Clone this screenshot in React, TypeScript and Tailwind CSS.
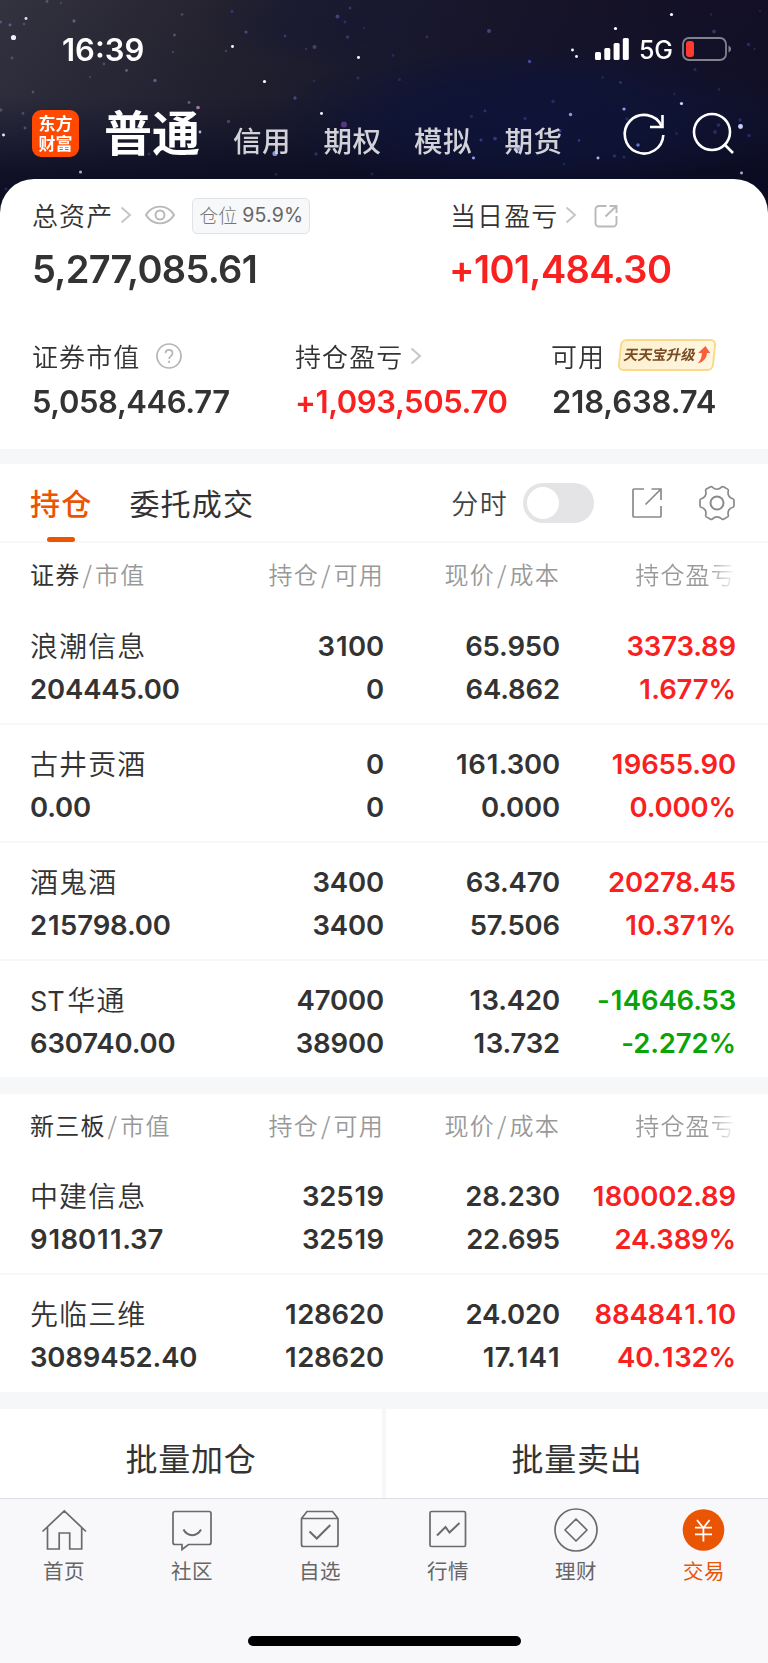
import React from "react";

const CJK = "font-['Noto_Sans_CJK_SC',sans-serif]";

type Star = [number, number, number, string, number];

const STARS: Star[] = [
  [13.5, 37.5, 2.8, "#eef0ff", 1],
  [26, 18.5, 1.6, "#e8e8ff", 0.95],
  [10, 25, 1.6, "#8f8bb8", 0.7],
  [0.5, 22, 1.6, "#7c78a8", 0.7],
  [24, 24, 1.4, "#7c78a8", 0.6],
  [47, 1.5, 1.6, "#7c78a8", 0.7],
  [74, 21, 1.8, "#8f8bb8", 0.7],
  [61, 3, 1.1, "#7c78a8", 0.6],
  [12, 58, 1.6, "#7c78a8", 0.6],
  [104, 64, 1.5, "#6e6a9a", 0.7],
  [126.5, 70.5, 1.5, "#9a92c4", 0.7],
  [155, 80.5, 1.8, "#8f7fc0", 0.8],
  [90, 77, 1.4, "#6e6a9a", 0.5],
  [33, 92, 1.5, "#8580b0", 0.6],
  [182, 14.5, 1.6, "#6660a0", 0.7],
  [174.5, 35, 1.7, "#7870b0", 0.7],
  [173, 52, 1.4, "#7870b0", 0.5],
  [232, 11.5, 1.5, "#5a50a0", 0.7],
  [246, 32, 1.7, "#6a60c0", 0.8],
  [232.5, 46.5, 1.6, "#ffffff", 1],
  [226, 51, 1.4, "#6a60a0", 0.6],
  [285, 36, 1.5, "#5a50a0", 0.7],
  [337.5, 16.5, 2.1, "#5f56ac", 0.85],
  [350, 8, 1.6, "#544c9c", 0.7],
  [345, 22, 1.5, "#544c9c", 0.6],
  [347.5, 37, 1.9, "#544c9c", 0.7],
  [314.5, 47, 2.2, "#6d569f", 0.8],
  [306, 49, 1.2, "#6d569f", 0.6],
  [358.5, 57.5, 1.6, "#ffffff", 1],
  [364, 28, 1.1, "#544c9c", 0.6],
  [358, 78, 1.6, "#544c9c", 0.6],
  [314, 81, 1.4, "#443c8c", 0.6],
  [264.5, 81.5, 1.7, "#ffffff", 1],
  [295, 98, 1.8, "#6d60b0", 0.8],
  [321.5, 113.5, 1.6, "#f4f4ff", 1],
  [344, 124.5, 3.3, "#7a4fa6", 0.85],
  [198, 107.5, 2, "#b679b8", 0.9],
  [189, 102.5, 1.6, "#8f7fc0", 0.8],
  [228.5, 121.5, 1.8, "#6a559a", 0.8],
  [200, 132, 1.5, "#c8c8ff", 0.9],
  [275, 153.5, 2.8, "#8fa2e8", 0.9],
  [316, 154, 1.8, "#3d4398", 0.8],
  [80.5, 172, 1.7, "#b7b9e8", 0.9],
  [3.5, 135, 1.6, "#f0f0ff", 0.95],
  [25, 128, 1.6, "#7c78a8", 0.7],
  [23, 113.5, 1.5, "#7c78a8", 0.6],
  [0.8, 110, 1.8, "#8580b0", 0.6],
  [149, 154, 1.6, "#5a5690", 0.5],
  [6, 189, 1.6, "#45417c", 0.6],
  [276, 174.5, 1.5, "#333a88", 0.7],
  [372, 174, 1.6, "#333a88", 0.6],
  [489, 31, 2.3, "#5f56ac", 0.85],
  [427, 37, 1.6, "#4a4390", 0.7],
  [393, 55.5, 1.5, "#3c3a88", 0.7],
  [399.5, 79.5, 1.7, "#3c3a88", 0.7],
  [529.5, 61.5, 1.8, "#5f6cd0", 0.85],
  [572.5, 50, 1.6, "#ffffff", 0.95],
  [576.5, 56.5, 1.6, "#ffffff", 0.95],
  [615.5, 28.5, 1.7, "#ffffff", 1],
  [671.5, 14.5, 1.7, "#ffffff", 1],
  [714, 31.5, 2.1, "#4c4290", 0.85],
  [711, 14.5, 1.5, "#3a3478", 0.6],
  [760, 11, 1.4, "#3a3478", 0.6],
  [748.5, 44.5, 1.8, "#3c3c88", 0.8],
  [754.5, 49, 1.2, "#3c3c88", 0.7],
  [695, 69.5, 1.7, "#3c3c88", 0.7],
  [602.5, 77.5, 1.6, "#34367c", 0.7],
  [620.5, 82.5, 1.6, "#3c40a0", 0.8],
  [719, 89.5, 1.6, "#34367c", 0.7],
  [674.5, 94, 1.3, "#34367c", 0.7],
  [681.5, 103.5, 1.7, "#cfd8ff", 1],
  [624, 109, 1.7, "#9aa6f0", 0.95],
  [570.5, 114.5, 1.8, "#93a0ee", 0.95],
  [553, 101.5, 1.8, "#3c40a0", 0.7],
  [485, 111, 1.6, "#3c40a0", 0.8],
  [471.5, 116.5, 1.6, "#3c40a0", 0.7],
  [525, 118.5, 1.8, "#3c40a0", 0.7],
  [481, 140, 1.7, "#4a52c0", 0.8],
  [495, 138.5, 2, "#4a52c0", 0.8],
  [518, 148, 3, "#8fa2e8", 0.9],
  [560, 131, 1.8, "#4a52c0", 0.8],
  [579, 140.5, 1.5, "#4a52c0", 0.7],
  [473.5, 158, 1.6, "#a4b0f4", 0.95],
  [598, 158, 1.6, "#b9bff0", 0.95],
  [614.5, 156, 1.9, "#3c3c98", 0.8],
  [624, 157, 1.6, "#3c3c98", 0.7],
  [638, 145, 1.9, "#6f7ee0", 0.9],
  [627, 119, 1.8, "#34367c", 0.8],
  [676.5, 133.5, 1.6, "#34367c", 0.7],
  [715, 132, 2.2, "#3c3c88", 0.8],
  [718.5, 125, 2, "#3c3c88", 0.8],
  [740.5, 126.5, 2.7, "#c6d0ff", 1],
  [740, 120, 1.8, "#3c3c98", 0.8],
  [749, 135.5, 2, "#3c3c98", 0.7],
  [741.5, 173, 1.6, "#b9bff0", 0.9],
  [564, 164, 1.6, "#2c307c", 0.7],
];

function Sky() {
  return (
    <svg className="absolute inset-0 h-[240px] w-[768px]" viewBox="0 0 768 240" aria-hidden="true">
      <defs>
        <linearGradient id="sky" x1="0" y1="0" x2="1" y2="0">
          <stop offset="0" stopColor="#33323f" />
          <stop offset="0.3" stopColor="#24222e" />
          <stop offset="0.6" stopColor="#18162a" />
          <stop offset="1" stopColor="#120f26" />
        </linearGradient>
        <linearGradient id="depth" x1="0" y1="0" x2="0" y2="1">
          <stop offset="0" stopColor="#0b0f2c" stopOpacity="0" />
          <stop offset="0.4" stopColor="#0b0f2c" stopOpacity="0.15" />
          <stop offset="0.72" stopColor="#0a0b22" stopOpacity="0.85" />
          <stop offset="1" stopColor="#080a1e" />
        </linearGradient>
        <radialGradient id="blue">
          <stop offset="0" stopColor="#0e1438" stopOpacity="1" />
          <stop offset="0.5" stopColor="#0e1438" stopOpacity="0.75" />
          <stop offset="1" stopColor="#0e1438" stopOpacity="0" />
        </radialGradient>
        <filter id="soft" x="-50%" y="-50%" width="200%" height="200%">
          <feGaussianBlur stdDeviation="0.6" />
        </filter>
      </defs>
      <rect width="768" height="240" fill="url(#sky)" />
      <rect width="768" height="240" fill="url(#depth)" />
      <ellipse cx="530" cy="118" rx="260" ry="75" fill="url(#blue)" />
      <ellipse cx="340" cy="20" rx="140" ry="50" fill="url(#blue)" opacity="0.35" />
      <g filter="url(#soft)">
        {STARS.map(([x, y, r, c, o]) => (
          <circle key={`${x}-${y}`} cx={x} cy={y} r={r * 0.92} fill={c} opacity={o < 0.9 ? o * 0.75 : o} />
        ))}
      </g>
    </svg>
  );
}

function Chevron({ className = "" }: { className?: string }) {
  return (
    <svg className={`h-[18px] w-[12px] ${className}`} viewBox="0 0 12 18" fill="none" stroke="#c6c6c6" strokeWidth="2">
      <path d="M1.500 1.500 10 9l-8.500 7.500" />
    </svg>
  );
}

type Line = { name: string; value: string; qty: string; avail: string; price: string; cost: string; pl: string; rate: string };

const STOCKS: Line[] = [
  { name: "浪潮信息", value: "204445.00", qty: "3100", avail: "0", price: "65.950", cost: "64.862", pl: "3373.89", rate: "1.677%" },
  { name: "古井贡酒", value: "0.00", qty: "0", avail: "0", price: "161.300", cost: "0.000", pl: "19655.90", rate: "0.000%" },
  { name: "酒鬼酒", value: "215798.00", qty: "3400", avail: "3400", price: "63.470", cost: "57.506", pl: "20278.45", rate: "10.371%" },
  { name: "ST 华通", value: "630740.00", qty: "47000", avail: "38900", price: "13.420", cost: "13.732", pl: "-14646.53", rate: "-2.272%" },
];

const NEEQ: Line[] = [
  { name: "中建信息", value: "918011.37", qty: "32519", avail: "32519", price: "28.230", cost: "22.695", pl: "180002.89", rate: "24.389%" },
  { name: "先临三维", value: "3089452.40", qty: "128620", avail: "128620", price: "24.020", cost: "17.141", pl: "884841.10", rate: "40.132%" },
];

const GRID = "grid grid-cols-[204px_150px_176px_176px] pl-[30px]";
const LABEL = "text-[26px] leading-[30px] font-[350] tracking-[1.1px] font-['Noto_Sans_CJK_SC',sans-serif]";

function TableHead({ title }: { title: string }) {
  return (
    <div className={`${GRID} h-[63px] text-right text-[24px] leading-[62px] tracking-[1.2px] text-[#999] ${CJK} font-[350]`}>
      <div className="text-left whitespace-nowrap">
        <span className="font-normal text-[#333]">{title}</span>
        <span className="mr-[2px] ml-[2px]">/</span>市值
      </div>
      <div>持仓<span className="mx-[2px]">/</span>可用</div>
      <div>现价<span className="mx-[2px]">/</span>成本</div>
      <div>
        <span className="inline-block bg-linear-to-r from-[#999] from-72% to-[#fff] bg-clip-text text-transparent">持仓盈亏</span>
      </div>
    </div>
  );
}

/* The digit 1 gets a little side bearing so that figures line up between rows. */
function Num({ children }: { children: string }) {
  return (
    <div className="whitespace-nowrap">
      {children.split(/(1)/).map((part, i) => (part === "1" ? <span key={i} className="mr-[0.6px] ml-[1px]">1</span> : part))}
    </div>
  );
}

function Row({ line, last }: { line: Line; last: boolean }) {
  const tone = line.pl.startsWith("-") ? "text-[#0aa30a]" : "text-[#f8211f]";
  const latin = line.name.match(/^[A-Z]+ /)?.[0] ?? "";
  return (
    <div className={`${GRID} ${last ? "h-[116px]" : "h-[118px] border-b-2 border-[#f8f8fa]"} pt-[17.500px] text-right text-[27.500px] leading-[43px] font-semibold tracking-[-0.15px] text-[#333]`}>
      <div className="text-left">
        <div className="h-[43px] text-[28px] leading-[44px] font-[350] tracking-[1.1px] [word-spacing:-5px]">
          {latin && <span className="text-[27px] font-normal tracking-normal">{latin}</span>}
          {line.name.slice(latin.length)}
        </div>
        <Num>{line.value}</Num>
      </div>
      <div>
        <Num>{line.qty}</Num>
        <Num>{line.avail}</Num>
      </div>
      <div>
        <Num>{line.price}</Num>
        <Num>{line.cost}</Num>
      </div>
      <div className={tone}>
        <Num>{line.pl}</Num>
        <Num>{line.rate}</Num>
      </div>
    </div>
  );
}

const NAV: { label: string; icon: React.ReactNode; active?: boolean }[] = [
  {
    label: "首页",
    icon: <path d="M2.500 24.500 24.300 4l21.700 20.500M7.500 20.500V42h11.700V26h10.500v16h12V20.500" />,
  },
  {
    label: "社区",
    icon: (
      <>
        <path d="M7 4.500h34a2 2 0 0 1 2 2v29a2 2 0 0 1-2 2H20.500l-6.500 5v-5H7a2 2 0 0 1-2-2v-29a2 2 0 0 1 2-2Z" />
        <path d="M15.500 22.500c4 7.500 13.500 7.500 17.500 0" strokeWidth="2" />
      </>
    ),
  },
  {
    label: "自选",
    icon: (
      <>
        <path d="M5.500 11.500v26a2 2 0 0 0 2 2h32.500a2 2 0 0 0 2-2v-26l-5.500-7H11ZM5.500 11.500h36.500" />
        <path d="m13.500 24.500 7.300 7L34.300 18" strokeWidth="2" />
      </>
    ),
  },
  {
    label: "行情",
    icon: (
      <>
        <rect x="6" y="4.500" width="35.500" height="35" rx="1.500" />
        <path d="m13 28.500 8.500-8.500 4 5.500L35.500 16" strokeWidth="2" />
      </>
    ),
  },
  {
    label: "理财",
    icon: (
      <>
        <circle cx="24" cy="23" r="21" />
        <path d="m24 12 11 11-11 11-11-11Z" strokeLinejoin="round" />
      </>
    ),
  },
  {
    label: "交易",
    active: true,
    icon: (
      <>
        <circle cx="23.500" cy="23" r="20.800" fill="#ea5504" stroke="none" />
        <path d="m17 13 6.300 8 6.300-8M15 20.700h17M15 27.300h17M23.400 20v14.500" stroke="#fff" strokeWidth="1.800" />
      </>
    ),
  },
];

export default function App() {
  return (
    <div className="relative flex h-[1663px] w-[768px] flex-col overflow-hidden bg-[#f6f7f9] font-[Inter,'Noto_Sans_CJK_SC',sans-serif] text-[#333]">
      <Sky />

      <header className="relative text-white">
        <div className="flex h-[98px] items-center pr-[36px] pl-[62px]">
          <span className="text-[31px] leading-none font-semibold">16:39</span>
          <svg className="ml-auto h-[24px] w-[34px]" viewBox="0 0 34 24" fill="#fff">
            <rect x="0" y="15" width="6" height="8" rx="1.500" />
            <rect x="9.300" y="11" width="6" height="12" rx="1.500" />
            <rect x="18.600" y="6" width="6" height="17" rx="1.500" />
            <rect x="27.800" y="1" width="6" height="22" rx="1.500" />
          </svg>
          <span className="ml-[10px] w-[33px] pt-[3px] text-[25px] leading-none font-medium tracking-[-0.3px] whitespace-nowrap">5G</span>
          <svg className="ml-[10px] h-[24px] w-[50px]" viewBox="0 0 50 24" fill="none">
            <rect x="1" y="1" width="43" height="22" rx="6" stroke="#82828e" strokeWidth="1.800" />
            <rect x="4" y="4" width="8" height="16" rx="3" fill="#ff3b30" />
            <path d="M46.500 8.500c3.300 1.500 3.300 5.500 0 7Z" fill="#82828e" />
          </svg>
        </div>

        <div className={`flex h-[81px] pl-[32px] ${CJK}`}>
          <div className="mt-[12px] flex h-[47px] w-[47px] flex-col items-center rounded-[9px] bg-[#ff4800] pt-[3px] text-[17px] leading-[20px] font-bold">
            <span className="h-[20px]">东方</span>
            <span className="h-[20px]">财富</span>
          </div>
          <span className="ml-[25px] w-[129px] text-[48px] leading-[64px] font-bold">普通</span>
          <div className="flex gap-[32.500px] text-[28.500px] leading-[83px] font-medium tracking-[0.5px] text-[#d2d2d8]">
            <span>信用</span>
            <span>期权</span>
            <span>模拟</span>
            <span>期货</span>
          </div>
          <svg className="mt-[12px] ml-[57px] h-[48px] w-[48px]" viewBox="0 0 48 48" fill="none" stroke="#fff" strokeWidth="2.600">
            <path d="M43.300 25A19.300 19.300 0 1 1 41.500 16" />
            <path d="M42.500 5v12H30" />
          </svg>
          <svg className="mt-[12px] ml-[20px] h-[48px] w-[48px]" viewBox="0 0 48 48" fill="none" stroke="#fff" strokeWidth="2.600">
            <circle cx="24" cy="22" r="18" />
            <path d="m36 34 9 9" />
          </svg>
        </div>
      </header>

      <section className="relative flex h-[270px] flex-col rounded-t-[34px] bg-white pl-[32px]">
        <div className="flex h-[72px] items-center">
          <div className="flex w-[418px] items-center">
            <span className={LABEL}>总资产</span>
            <Chevron className="ml-[7px]" />
            <svg className="ml-[13px] h-[22px] w-[30px]" viewBox="0 0 30 22" fill="none" stroke="#b9b9b9" strokeWidth="2">
              <path d="M1 11C7.500-1.300 22.500-1.300 29 11 22.500 23.300 7.500 23.300 1 11Z" transform="translate(0 1.100) scale(1 .9)" />
              <circle cx="15" cy="11" r="4.500" />
            </svg>
            <div className="mt-[1px] ml-[17px] flex h-[36px] w-[118px] items-center justify-center gap-[5px] rounded-[5px] border border-[#e2e3e7] bg-[#f7f8fa] leading-none">
              <span className={`pb-[2px] text-[19px] font-light text-[#777] ${CJK}`}>仓位</span>
              <span className="text-[19.500px] tracking-[0.2px] text-[#666]">95.9%</span>
            </div>
          </div>
          <span className={LABEL}>当日盈亏</span>
          <Chevron className="ml-[7px]" />
          <svg className="mt-[1px] ml-[17px] h-[24px] w-[24px]" viewBox="0 0 24 24" fill="none" stroke="#b9b9b9" strokeWidth="1.900">
            <path d="M12.500 2H5a3.500 3.500 0 0 0-3.500 3.500V19A3.500 3.500 0 0 0 5 22.500h14A3.500 3.500 0 0 0 22.500 19v-7" />
            <path d="M15.500 2h7v7M22 2.500 11.500 12.500" />
          </svg>
        </div>
        <div className="flex h-[36px] items-center text-[38px] leading-none font-semibold tracking-[-0.6px]">
          <span className="w-[417px] tracking-[-0.7px]">5,277,085.61</span>
          <span className="text-[#f8211f]">+101,484.30</span>
        </div>

        <div className="mt-[49px] flex h-[40px]">
          <div className="flex w-[263px] items-center">
            <span className={LABEL}>证券市值</span>
            <svg className="ml-[16px] h-[26px] w-[26px]" viewBox="0 0 26 26" fill="none" stroke="#b5b5b5" strokeWidth="1.700">
              <circle cx="13" cy="13" r="12" />
              <path d="M9.500 10.300c.2-4.600 7-4.500 7 .1 0 2.600-3.400 2.800-3.400 5.600M13.100 17.800v2.100" />
            </svg>
          </div>
          <div className="flex w-[256px] items-center">
            <span className={LABEL}>持仓盈亏</span>
            <Chevron className="ml-[7px]" />
          </div>
          <div className="flex items-center">
            <span className={LABEL}>可用</span>
            <div className="mb-[2px] ml-[14px] flex h-[32px] w-[96px] -skew-x-6 items-center justify-center gap-[2px] rounded-[6px] border-2 border-[#fbd987] bg-linear-to-r from-[#fdf0cf] to-[#fef6e2]">
              <span className={`-skew-x-6 pb-[2px] text-[14.300px] leading-none font-bold whitespace-nowrap text-[#7a4a22] ${CJK}`}>天天宝升级</span>
              <svg className="h-[18px] w-[13px]" viewBox="0 0 13 18">
                <path d="M7.500 0 13 7H9.800C10 12 7.500 16 1.500 17.500 4.500 14 5 11 4.700 7H1Z" fill="#f9603a" />
              </svg>
            </div>
          </div>
        </div>
        <div className="mt-[8px] flex h-[34px] items-center text-[31px] leading-none font-semibold tracking-[-0.4px]">
          <span className="w-[263px]">5,058,446.77</span>
          <span className="w-[257px] text-[#f8211f]">+1,093,505.70</span>
          <span className="tracking-[-0.1px]">218,638.74</span>
        </div>
      </section>

      <section className="mt-[15px] bg-white">
        <div className="flex h-[79px] items-center border-b-2 border-[#f8f8fa] pl-[30px]">
          <div className={`relative text-[30px] leading-[75px] font-medium tracking-[1.200px] text-[#ea5504] ${CJK}`}>
            持仓
            <span className="absolute bottom-[-2px] left-[17px] h-[5.500px] w-[27.500px] rounded-full bg-[#ea5504]" />
          </div>
          <span className={`ml-[37px] text-[30px] leading-[75px] tracking-[1.200px] ${CJK}`}>委托成交</span>
          <span className={`ml-[197px] text-[27px] leading-[75px] font-[350] tracking-[1.500px] text-[#444] ${CJK}`}>分时</span>
          <div className="mt-[1px] ml-[15px] flex h-[40px] w-[71px] items-center rounded-full bg-[#e4e4e6] pl-[4px]">
            <div className="h-[32px] w-[32px] rounded-full bg-white" />
          </div>
          <svg className="mt-[1px] ml-[37px] h-[32px] w-[32px]" viewBox="0 0 32 32" fill="none" stroke="#8a8a8a" strokeWidth="1.700">
            <path d="M13 2H3a1 1 0 0 0-1 1v26a1 1 0 0 0 1 1h26a1 1 0 0 0 1-1V19" />
            <path d="M20.500 2H30v11M29.500 2.500 14.500 17.500" />
          </svg>
          <svg className="mt-[1px] ml-[36px] h-[36px] w-[36px]" viewBox="0 0 36 36" fill="none" stroke="#8a8a8a" strokeWidth="1.700">
            <path d="M7 4.300 11.500 1.700Q12.600 1.200 13.500 2.200C16 4.900 20 4.900 22.500 2.200Q23.400 1.200 24.500 1.700L28.600 4.100Q29.600 4.800 29.300 6C28.300 9.800 30.300 12.800 33.800 13.700Q35 14.100 35 15.300V20.700Q35 21.900 33.800 22.300C30.300 23.200 28.300 26.200 29.300 30Q29.600 31.200 28.600 31.900L24.500 34.300Q23.400 34.800 22.500 33.800C20 31.100 16 31.100 13.500 33.800Q12.600 34.800 11.500 34.300L7.400 31.900Q6.400 31.200 6.700 30C7.700 26.200 5.700 23.200 2.200 22.300Q1 21.900 1 20.700V15.300Q1 14.100 2.200 13.700C5.700 12.800 7.700 9.800 6.700 6Q6.400 4.800 7 4.300Z" />
            <circle cx="18" cy="18" r="6.500" strokeWidth="2" />
          </svg>
        </div>
        <TableHead title="证券" />
        <div className="h-[1px]" />
        {STOCKS.map((line, i) => (
          <Row key={line.name} line={line} last={i === STOCKS.length - 1} />
        ))}
      </section>

      <section className="mt-[17px] bg-white pb-[1px]">
        <TableHead title="新三板" />
        {NEEQ.map((line, i) => (
          <Row key={line.name} line={line} last={i === NEEQ.length - 1} />
        ))}
      </section>

      <div className={`mt-[17px] grid h-[89px] grid-cols-2 gap-[4px] text-center text-[32px] leading-[96px] tracking-[0.8px] ${CJK}`}>
        <div className="bg-white">批量加仓</div>
        <div className="bg-white">批量卖出</div>
      </div>

      <nav className="flex flex-1 flex-col items-center border-t border-[#dddee2] bg-[#f8f8fb]">
        <div className="grid w-full grid-cols-6 pt-[8px]">
          {NAV.map(({ label, icon, active }) => (
            <div key={label} className={`flex flex-col items-center ${active ? "text-[#ea5504]" : "text-[#666]"}`}>
              <svg className="h-[48px] w-[48px]" viewBox="0 0 48 48" fill="none" stroke="#6a6a6a" strokeWidth="1.700">
                {icon}
              </svg>
              <span className={`mt-[3px] text-[20.500px] leading-[24px] tracking-[0.6px] ${CJK}`}>{label}</span>
            </div>
          ))}
        </div>
        <div className="mt-[54px] h-[10px] w-[273px] rounded-full bg-black" />
      </nav>
    </div>
  );
}
